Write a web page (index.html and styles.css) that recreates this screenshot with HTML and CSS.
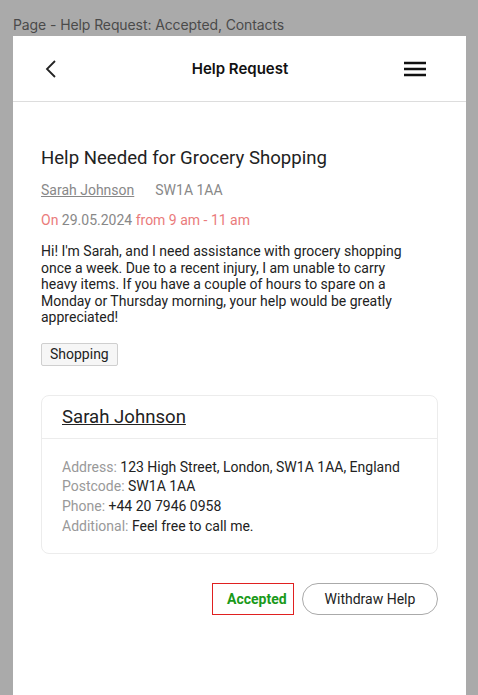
FILE: index.html
```html
<!DOCTYPE html>
<html>
<head>
<meta charset="utf-8">
<link rel="stylesheet" href="styles.css">
</head>
<body>
<div class="page-label">Page - Help Request: Accepted, Contacts</div>
<div class="panel">
  <header class="topbar">
    <svg class="icon-back" width="14" height="20" viewBox="0 0 14 20"><path d="M11 2 L3 10 L11 18" fill="none" stroke="#222" stroke-width="1.8"/></svg>
    <div class="topbar-title">Help Request</div>
    <svg class="icon-menu" width="22" height="16" viewBox="0 0 22 16"><path d="M0 2H22M0 8H22M0 14H22" stroke="#111" stroke-width="2.4"/></svg>
  </header>
  <main class="content">
    <h1 class="req-title">Help Needed for Grocery Shopping</h1>
    <div class="meta">
      <a class="meta-name">Sarah Johnson</a>
      <span class="meta-post">SW1A 1AA</span>
    </div>
    <div class="when"><span class="accent">On</span> 29.05.2024 <span class="accent">from 9 am - 11 am</span></div>
    <p class="desc">Hi! I'm Sarah, and I need assistance with grocery shopping once a week. Due to a recent injury, I am unable to carry heavy items. If you have a couple of hours to spare on a Monday or Thursday morning, your help would be greatly appreciated!</p>
    <div class="tags"><span class="tag">Shopping</span></div>
    <section class="card">
      <div class="card-head"><a class="card-name">Sarah Johnson</a></div>
      <div class="card-body">
        <div class="row"><span class="lbl">Address:</span> 123 High Street, London, SW1A 1AA, England</div>
        <div class="row"><span class="lbl">Postcode:</span> SW1A 1AA</div>
        <div class="row"><span class="lbl">Phone:</span> +44 20 7946 0958</div>
        <div class="row"><span class="lbl">Additional:</span> Feel free to call me.</div>
      </div>
    </section>
    <div class="actions">
      <span class="status">Accepted</span>
      <button class="btn">Withdraw Help</button>
    </div>
  </main>
</div>
</body>
</html>
```

FILE: styles.css
```css
html, body {
  margin: 0;
  padding: 0;
  background: #aaaaaa;
  height: 100%;
}
body {
  font-family: Roboto, "Liberation Sans", sans-serif;
  color: #222;
}
.page-label {
  font-family: Inter, "Liberation Sans", sans-serif;
  font-size: 14px;
  color: #4a4a4a;
  height: 36px;
  line-height: 16px;
  padding: 17px 0 0 13px;
  box-sizing: border-box;
  letter-spacing: -0.1px;
}
.panel {
  margin-left: 13px;
  width: 453px;
  min-height: 659px;
  background: #fff;
}
.topbar {
  height: 66px;
  border-bottom: 1px solid #dddddd;
  display: flex;
  align-items: center;
  justify-content: space-between;
  padding: 0 40px 0 31px;
  box-sizing: border-box;
}
.icon-back { display: block; }
.icon-menu { display: block; }
.topbar-title {
  font-family: Inter, "Liberation Sans", sans-serif;
  font-weight: 600;
  font-size: 15px;
  color: #111;
  margin-left: 18px;
}
.content {
  padding: 45px 28px 0 28px;
}
.req-title {
  font-size: 18.6px;
  font-weight: 400;
  margin: 0;
  line-height: 22px;
  color: #222;
}
.meta {
  margin-top: 13px;
  font-size: 14px;
  line-height: 16px;
  color: #888;
  display: flex;
  gap: 21px;
}
.meta-name { text-decoration: underline; }
.when {
  margin-top: 14px;
  font-size: 14px;
  line-height: 16px;
  color: #888;
}
.accent { color: #ea7b7b; }
.desc {
  margin: 15px 0 0 0;
  max-width: 366px;
  font-size: 14px;
  line-height: 16.5px;
  color: #222;
}
.tags { margin-top: 17px; display: flex; }
.tag {
  font-size: 14px;
  line-height: 21px;
  padding: 0 8px;
  border: 1px solid #cfcfcf;
  background: #f6f6f6;
  border-radius: 2px;
  color: #222;
}
.card {
  margin-top: 29px;
  border: 1px solid #ececec;
  border-radius: 8px;
}
.card-head {
  height: 42px;
  border-bottom: 1px solid #ececec;
  padding: 0 20px;
  display: flex;
  align-items: center;
}
.card-name {
  font-size: 18.6px;
  text-decoration: underline;
  color: #222;
}
.card-body {
  padding: 19px 20px 17px 20px;
  font-size: 14px;
  line-height: 19.7px;
  color: #222;
}
.lbl { color: #999; }
.actions {
  margin-top: 29px;
  display: flex;
  justify-content: flex-end;
  align-items: center;
  gap: 8px;
}
.status {
  border: 1px solid #e02020;
  color: #1a9a1a;
  font-weight: 700;
  font-size: 14px;
  width: 82px;
  height: 32px;
  box-sizing: border-box;
  display: flex;
  align-items: center;
  padding-left: 14px;
}
.btn {
  font-family: Roboto, "Liberation Sans", sans-serif;
  font-size: 14px;
  color: #222;
  background: #fff;
  border: 1px solid #aaa;
  border-radius: 16px;
  width: 136px;
  height: 32px;
}
```
